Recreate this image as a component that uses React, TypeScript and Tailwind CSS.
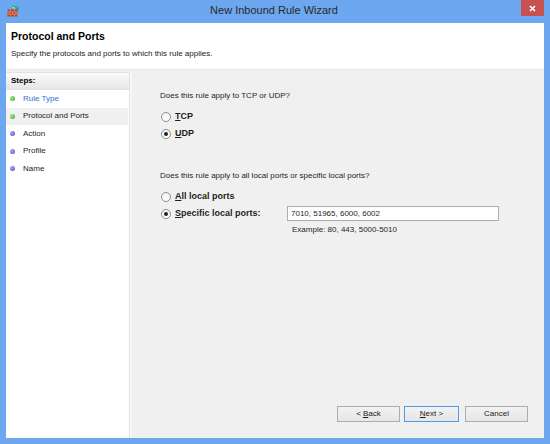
import React from 'react';

const font = { fontFamily: '"Liberation Sans", Arial, sans-serif' };

function FirewallIcon() {
  return (
    <svg width="13" height="13" viewBox="0 0 13 13">
      <defs>
        <radialGradient id="globe" cx="0.4" cy="0.35" r="0.7">
          <stop offset="0" stopColor="#b9f0ff" />
          <stop offset="0.5" stopColor="#3fb6e6" />
          <stop offset="1" stopColor="#1d7fb8" />
        </radialGradient>
      </defs>
      <circle cx="8" cy="4" r="3.6" fill="url(#globe)" />
      <path d="M5.5 2.2 Q7.5 1.5 8.5 3.2 Q9.5 4.8 11.3 4.2" stroke="#3aa53a" strokeWidth="1.4" fill="none" />
      <rect x="0.5" y="5.5" width="10" height="7" fill="#b8402a" />
      <path d="M0.5 7.8 H10.5 M0.5 10.2 H10.5 M3.5 5.5 V7.8 M7.5 5.5 V7.8 M2 7.8 V10.2 M5.5 7.8 V10.2 M9 7.8 V10.2 M3.5 10.2 V12.5 M7.5 10.2 V12.5" stroke="#e7a68a" strokeWidth="0.6" />
    </svg>
  );
}

function Radio({ checked }: { checked?: boolean }) {
  return (
    <span className="w-[10px] h-[10px] rounded-full border border-[#8d8d8d] bg-gradient-to-b from-[#f4f4f4] to-white flex items-center justify-center shrink-0">
      {checked && <span className="w-[4px] h-[4px] rounded-full bg-[#222]" />}
    </span>
  );
}

function Btn({ children, w, primary }: { children: React.ReactNode; w: string; primary?: boolean }) {
  return (
    <div
      className={`${w} h-[16px] flex items-center justify-center text-[8px] text-[#1a1a1a] border bg-gradient-to-b from-[#f2f2f2] to-[#e6e6e6] ${
        primary ? 'border-[#4f9be6]' : 'border-[#adadad]'
      }`}
    >
      {children}
    </div>
  );
}

const steps = [
  { label: 'Rule Type', done: true, link: true },
  { label: 'Protocol and Ports', done: true, active: true },
  { label: 'Action' },
  { label: 'Profile' },
  { label: 'Name' },
];

export default function App() {
  return (
    <div className="w-[550px] h-[444px] bg-[#6ca7f0] flex flex-col overflow-hidden" style={font}>
      {/* title bar */}
      <div className="h-[23px] flex items-start shrink-0">
        <div className="pl-[7px] pt-[4px] w-[40px]">
          <FirewallIcon />
        </div>
        <div className="flex-1 text-center text-[11px] leading-[23px] text-[#2a2a2a] -mt-[1px] pr-[13px]">New Inbound Rule Wizard</div>
        <div className="w-[23px] h-[16px] bg-[#c75050] flex items-center justify-center mr-[6px]">
          <svg width="7" height="7" viewBox="0 0 7 7">
            <path d="M1 1 L6 6 M6 1 L1 6" stroke="white" strokeWidth="1.6" />
          </svg>
        </div>
      </div>

      {/* client */}
      <div className="mx-[6px] h-[415px] bg-[#f0f0f0] flex flex-col">
        <div className="h-[47px] bg-white border-b border-[#e9e9e9] pl-[5px] shrink-0">
          <div className="pt-[7px] text-[10.5px] leading-[12px] font-bold text-black">Protocol and Ports</div>
          <div className="pt-[6px] text-[8px] leading-[12px] text-[#222]">Specify the protocols and ports to which this rule applies.</div>
        </div>

        <div className="flex flex-1 min-h-0 pt-[2px]">
          {/* steps panel */}
          <div className="w-[124px] bg-white border-t border-r border-[#e2e2e2] flex flex-col">
            <div className="h-[17px] bg-gradient-to-b from-[#fbfbfb] to-[#e6e6e6] border-b border-[#e4e4e4] pl-[5px] text-[8px] leading-[16px] font-bold text-black">
              Steps:
            </div>
            {steps.map((s) => (
              <div
                key={s.label}
                className={`h-[17.5px] flex items-center pl-[4px] mr-[1px] ${s.active ? 'bg-[#f0f0f0]' : ''}`}
              >
                <span
                  className={`w-[5px] h-[5px] rounded-full shrink-0 ${
                    s.done ? 'bg-[radial-gradient(circle_at_35%_35%,#a6e88a,#3f9f26)]' : 'bg-[radial-gradient(circle_at_35%_35%,#b1a8f5,#5145c0)]'
                  }`}
                />
                <span className={`ml-[8px] text-[8px] ${s.link ? 'text-[#3470d0]' : 'text-[#1e1e1e]'}`}>{s.label}</span>
              </div>
            ))}
          </div>
          <div className="w-[2px] bg-[#f7f7f7]" />

          {/* content */}
          <div className="flex-1 flex flex-col text-[8px] text-[#1e1e1e]">
            <div className="pl-[28px] pt-[18px] flex flex-col">
              <div className="h-[12px] leading-[12px]">Does this rule apply to TCP or UDP?</div>
              <div className="mt-[7px] h-[16px] flex items-center pl-[1px] gap-[4px]">
                <Radio />
                <span className="font-bold text-[9px]"><u>T</u>CP</span>
              </div>
              <div className="mt-[1px] h-[16px] flex items-center pl-[1px] gap-[4px]">
                <Radio checked />
                <span className="font-bold text-[9px]"><u>U</u>DP</span>
              </div>

              <div className="mt-[28px] h-[12px] leading-[12px]">Does this rule apply to all local ports or specific local ports?</div>
              <div className="mt-[7px] h-[16px] flex items-center pl-[1px] gap-[4px]">
                <Radio />
                <span className="font-bold text-[9px]"><u>A</u>ll local ports</span>
              </div>
              <div className="h-[17px] flex items-center pl-[1px]">
                <div className="w-[126px] flex items-center gap-[4px]">
                  <Radio checked />
                  <span className="font-bold text-[9px]"><u>S</u>pecific local ports:</span>
                </div>
                <div className="w-[212px] h-[15px] bg-white border border-[#abadb3] pl-[3px] leading-[13px] text-[8px]">
                  7010, 51965, 6000, 6002
                </div>
              </div>
              <div className="mt-[2px] h-[12px] leading-[12px] pl-[132px]">Example: 80, 443, 5000-5010</div>
            </div>

            <div className="mt-auto mb-[16px] pr-[16px] flex justify-end">
              <Btn w="w-[63px]">&lt; <u className="ml-[2px]">B</u>ack</Btn>
              <div className="w-[4px]" />
              <Btn w="w-[55px]" primary>
                <u>N</u>ext &gt;
              </Btn>
              <div className="w-[6px]" />
              <Btn w="w-[63px]">Cancel</Btn>
            </div>
          </div>
        </div>
      </div>
    </div>
  );
}
